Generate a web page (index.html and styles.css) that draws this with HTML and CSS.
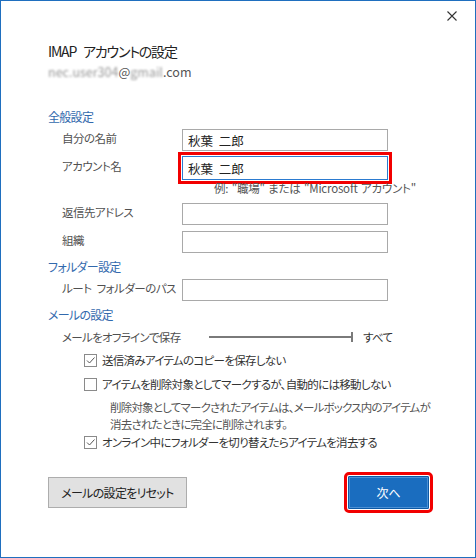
FILE: index.html
```html
<!DOCTYPE html>
<html lang="ja">
<head>
<meta charset="utf-8">
<title>IMAP アカウントの設定</title>
<link rel="stylesheet" href="styles.css">
</head>
<body>
<div class="window">
  <div class="titlebar">
    <svg class="close" width="10" height="10" viewBox="0 0 10 10" aria-label="閉じる">
      <path d="M0.5 0.5 L9.5 9.5 M9.5 0.5 L0.5 9.5" stroke="#333" stroke-width="1.1" fill="none"/>
    </svg>
  </div>
  <div class="content">
    <h1 class="title">IMAP アカウントの設定</h1>
    <div class="account"><span class="blur">nec.user304</span>@<span class="blur">gmail</span>.com</div>

    <h2 class="section">全般設定</h2>
    <div class="row first">
      <label class="lbl">自分の名前</label>
      <input class="field" type="text" value="秋葉 二郎">
    </div>
    <div class="row focus-row">
      <label class="lbl">アカウント名</label>
      <input class="field focused" type="text" value="秋葉 二郎">
    </div>
    <div class="example">例: "職場" または "Microsoft アカウント"</div>
    <div class="row r3">
      <label class="lbl">返信先アドレス</label>
      <input class="field" type="text" value="">
    </div>
    <div class="row r4">
      <label class="lbl">組織</label>
      <input class="field" type="text" value="">
    </div>

    <h2 class="section s2">フォルダー設定</h2>
    <div class="row first">
      <label class="lbl">ルート フォルダーのパス</label>
      <input class="field" type="text" value="">
    </div>

    <h2 class="section s2">メールの設定</h2>
    <div class="offline">
      <span class="offline-label">メールをオフラインで保存</span>
      <span class="slider"><span class="track"></span><span class="tick"></span></span>
      <span class="all">すべて</span>
    </div>

    <div class="check c1">
      <span class="box"><svg width="11" height="11" viewBox="0 0 11 11"><path d="M2 5.5 L4.5 8 L9.5 2.5" stroke="#555" stroke-width="1" fill="none"/></svg></span>
      <span>送信済みアイテムのコピーを保存しない</span>
    </div>
    <div class="check c2">
      <span class="box"></span>
      <span>アイテムを削除対象としてマークするが、自動的には移動しない</span>
    </div>
    <div class="desc">削除対象としてマークされたアイテムは、メールボックス内のアイテムが<br>消去されたときに完全に削除されます。</div>
    <div class="check c3">
      <span class="box"><svg width="11" height="11" viewBox="0 0 11 11"><path d="M2 5.5 L4.5 8 L9.5 2.5" stroke="#555" stroke-width="1" fill="none"/></svg></span>
      <span>オンライン中にフォルダーを切り替えたらアイテムを消去する</span>
    </div>

    <div class="buttons">
      <button class="btn reset" type="button">メールの設定をリセット</button>
      <button class="btn next" type="button">次へ</button>
    </div>
  </div>
</div>
</body>
</html>
```
FILE: styles.css
```css
html, body {
  margin: 0;
  background: #fff;
}

.window {
  width: 476px;
  height: 558px;
  box-sizing: border-box;
  border: 1px solid #1f6fbf;
  background: #fff;
  font-family: "Noto Sans CJK JP", "Noto Sans", sans-serif;
  font-feature-settings: "palt";
  font-size: 11.5px;
  letter-spacing: -0.7px;
  color: #333;
}

.titlebar {
  height: 30px;
  display: flex;
  justify-content: flex-end;
  align-items: center;
  padding-right: 18px;
}

.close {
  display: block;
}

.content {
  padding-left: 47px;
  padding-right: 46px;
}

.title {
  margin: 10px 0 0;
  font-size: 14px;
  font-weight: normal;
  line-height: 20px;
  letter-spacing: -1.2px;
  word-spacing: 5px;
  color: #222;
}

.account {
  margin-top: 2px;
  font-size: 12.5px;
  line-height: 18px;
  letter-spacing: 0;
  color: #555;
}

.blur {
  filter: blur(1.3px);
  color: #9a9a9a;
}

.section {
  margin: 27px 0 0;
  font-size: 12px;
  font-weight: normal;
  line-height: 18px;
  color: #3269ad;
}

.section.s2 {
  margin-top: 5px;
}

.row {
  display: flex;
  align-items: flex-start;
  margin-left: 14px;
}

.row.first {
  margin-top: 3px;
}

.row.focus-row {
  margin-top: 5px;
}

.row.r3 {
  margin-top: 7px;
}

.row.r4 {
  margin-top: 6px;
}

.lbl {
  width: 120px;
  line-height: 18px;
  letter-spacing: -0.5px;
  word-spacing: 3px;
  color: #505050;
  white-space: nowrap;
}

.focus-row .lbl {
  padding-top: 1px;
}

.field {
  width: 206px;
  height: 22px;
  box-sizing: border-box;
  margin: 0;
  padding: 0 5px;
  border: 1px solid #a9a9a9;
  border-radius: 0;
  background: #fff;
  font: inherit;
  font-size: 12.5px;
  letter-spacing: 0;
  word-spacing: 3px;
  color: #222;
  outline: none;
}

.field.focused {
  height: 24px;
  border-color: #2b7bd0;
  outline: 3px solid #f20000;
  outline-offset: 1px;
}

.example {
  margin-top: 1px;
  padding-right: 13px;
  line-height: 15px;
  letter-spacing: -0.2px;
  word-spacing: 1px;
  text-align: right;
  color: #555;
}

.offline {
  display: flex;
  align-items: center;
  height: 18px;
  margin-top: 4px;
  margin-left: 14px;
}

.offline-label {
  width: 147px;
  color: #505050;
  white-space: nowrap;
}

.slider {
  display: flex;
  align-items: center;
  width: 144px;
  height: 10px;
}

.track {
  flex: 1;
  height: 2px;
  background: #7a7a7a;
}

.tick {
  width: 2px;
  height: 10px;
  background: #7a7a7a;
}

.all {
  margin-left: 10px;
  color: #333;
}

.check {
  display: flex;
  align-items: center;
  height: 18px;
  margin-left: 36px;
  color: #333;
  white-space: nowrap;
}

.check.c1 {
  margin-top: 5px;
}

.check.c2 {
  margin-top: 6px;
}

.box {
  width: 13px;
  height: 13px;
  box-sizing: border-box;
  border: 1px solid #8a8a8a;
  margin-right: 5px;
  display: flex;
  align-items: center;
  justify-content: center;
  background: #fff;
}

.box svg {
  display: block;
}

.desc {
  margin-top: 6px;
  margin-left: 62px;
  line-height: 17px;
  letter-spacing: -0.8px;
  color: #555;
  white-space: nowrap;
}

.buttons {
  display: flex;
  justify-content: space-between;
  align-items: center;
  margin-top: 25px;
  height: 33px;
}

.btn {
  margin: 0;
  padding: 0;
  font: inherit;
  font-size: 12px;
  letter-spacing: -0.7px;
  white-space: nowrap;
  cursor: default;
}

.reset {
  width: 139px;
  height: 31px;
  border: 1px solid #adadad;
  background: #e1e1e1;
  color: #222;
}

.next {
  width: 81px;
  height: 33px;
  border: 1px solid #0d5aa6;
  background: #1a6dbf;
  box-shadow: inset 0 0 0 1px #4a8fd3;
  color: #fff;
  letter-spacing: 0;
  border-radius: 1px;
  outline: 3px solid #f20000;
  outline-offset: 1px;
}
```
